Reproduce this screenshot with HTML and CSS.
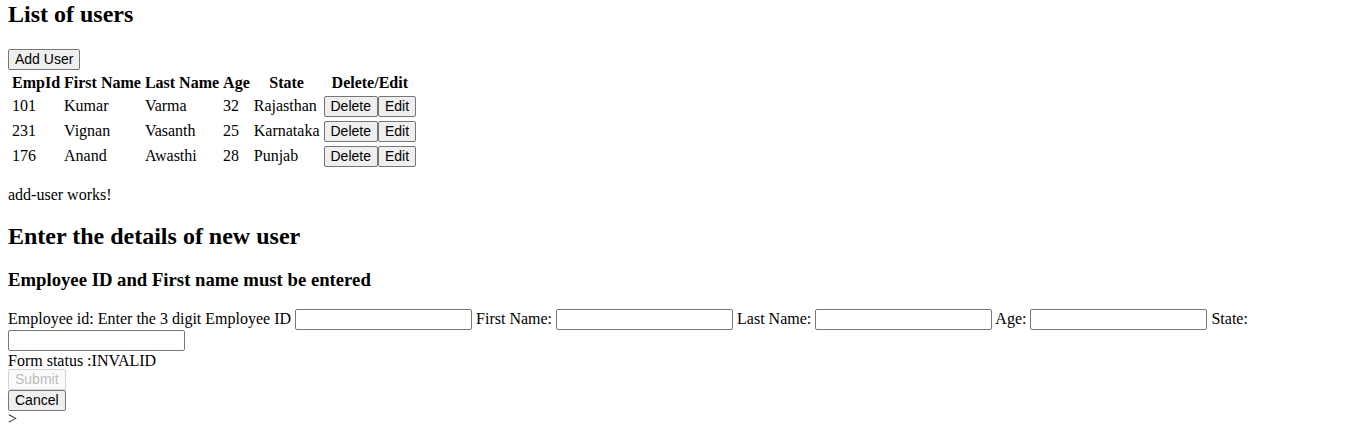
FILE: index.html
```html
<!DOCTYPE html>
<html>
<head>
<meta charset="utf-8">
<link rel="stylesheet" href="styles.css">
</head>
<body>
<h2 class="title first">List of users</h2>
<div class="toolbar"><button class="btn">Add User</button></div>
<table class="users">
<thead>
<tr><th>EmpId</th><th>First Name</th><th>Last Name</th><th>Age</th><th>State</th><th>Delete/Edit</th></tr>
</thead>
<tbody>
<tr><td>101</td><td>Kumar</td><td>Varma</td><td>32</td><td>Rajasthan</td><td><button class="btn">Delete</button><button class="btn">Edit</button></td></tr>
<tr><td>231</td><td>Vignan</td><td>Vasanth</td><td>25</td><td>Karnataka</td><td><button class="btn">Delete</button><button class="btn">Edit</button></td></tr>
<tr><td>176</td><td>Anand</td><td>Awasthi</td><td>28</td><td>Punjab</td><td><button class="btn">Delete</button><button class="btn">Edit</button></td></tr>
</tbody>
</table>
<p class="note">add-user works!</p>
<h2 class="title section">Enter the details of new user</h2>
<h3 class="subtitle">Employee ID and First name must be entered</h3>
<form class="form">
<div class="fields">Employee id: Enter the 3 digit Employee ID <input class="field" type="text"> First Name: <input class="field" type="text"> Last Name: <input class="field" type="text"> Age: <input class="field" type="text"> State: <input class="field" type="text"></div>
<div class="status">Form status :INVALID</div>
<div><button class="btn" type="button" disabled>Submit</button></div>
<div><button class="btn" type="button">Cancel</button></div>
</form>
<div class="tail">&gt;</div>
</body>
</html>
```

FILE: styles.css
```css
html, body {
  margin: 0;
  padding: 0;
}
body {
  padding: 1px 8px 0 8px;
  font-family: "Liberation Serif", "Times New Roman", serif;
  font-size: 16px;
  color: #000;
  background: #fff;
}
.title {
  font-size: 24px;
  font-weight: bold;
  margin: 19.92px 0;
}
.title.first {
  margin-top: 0;
}
.title.section {
  margin-top: 19px;
  margin-bottom: 18px;
}
.toolbar {
  padding-top: 1px;
}
.subtitle {
  font-size: 18.72px;
  font-weight: bold;
  margin: 18.72px 0 18px;
}
.btn {
  font-family: "Liberation Sans", Arial, sans-serif;
  font-size: 14px;
  color: #000;
  background: #efefef;
  border: 1px solid #767676;
  border-radius: 2px;
  padding: 0 6px;
  height: 21px;
  line-height: normal;
  margin: 0;
  vertical-align: middle;
}
.btn:disabled {
  color: rgba(16, 16, 16, 0.3);
  background: rgba(239, 239, 239, 0.3);
  border-color: rgba(118, 118, 118, 0.3);
}
.users {
  border-spacing: 2px;
  margin: 1px 0 0 1px;
}
.users th, .users td {
  padding: 1px;
}
.users th {
  font-weight: bold;
  text-align: center;
}
.users td {
  text-align: left;
}
.note {
  margin: 16px 0;
}
.field {
  width: 177px;
  height: 21px;
  box-sizing: border-box;
  border: 1px solid #767676;
  border-radius: 2px;
  padding: 1px 2px;
  font-family: "Liberation Sans", Arial, sans-serif;
  font-size: 13.333px;
  margin: 0;
  vertical-align: baseline;
}
.form {
  margin: 0;
}
.status {
  padding-top: 1px;
  margin-bottom: -1px;
}
.tail {
  margin-top: -1px;
}
```
